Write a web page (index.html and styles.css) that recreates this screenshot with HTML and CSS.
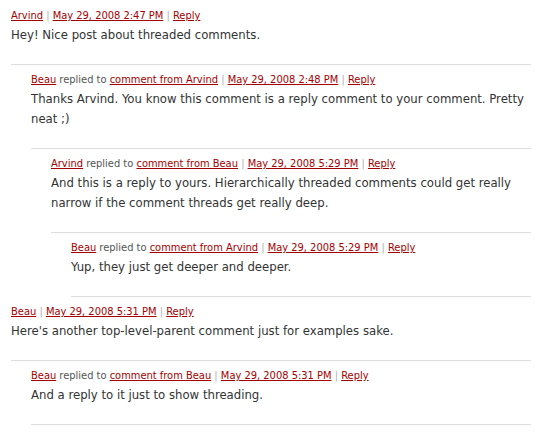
FILE: index.html
```html
<!doctype html>
<html lang="en">
<head>
  <meta charset="utf-8">
  <title>Threaded Comments</title>
  <link rel="stylesheet" href="styles.css">
</head>
<body>

<div class="comment-list">

  <div class="comment">
    <div class="comment-body">
      <div class="meta"><a href="#">Arvind</a> <span class="sep">|</span> <a href="#">May 29, 2008 2:47 PM</a> <span class="sep">|</span> <a href="#">Reply</a></div>
      <p>Hey! Nice post about threaded comments.</p>
    </div>
    <div class="children">
      <div class="comment">
        <div class="comment-body">
          <div class="meta"><a href="#">Beau</a> replied to <a href="#">comment from Arvind</a> <span class="sep">|</span> <a href="#">May 29, 2008 2:48 PM</a> <span class="sep">|</span> <a href="#">Reply</a></div>
          <p>Thanks Arvind. You know this comment is a reply comment to your comment. Pretty neat ;)</p>
        </div>
        <div class="children">
          <div class="comment">
            <div class="comment-body">
              <div class="meta"><a href="#">Arvind</a> replied to <a href="#">comment from Beau</a> <span class="sep">|</span> <a href="#">May 29, 2008 5:29 PM</a> <span class="sep">|</span> <a href="#">Reply</a></div>
              <p>And this is a reply to yours. Hierarchically threaded comments could get really narrow if the comment threads get really deep.</p>
            </div>
            <div class="children">
              <div class="comment">
                <div class="comment-body">
                  <div class="meta"><a href="#">Beau</a> replied to <a href="#">comment from Arvind</a> <span class="sep">|</span> <a href="#">May 29, 2008 5:29 PM</a> <span class="sep">|</span> <a href="#">Reply</a></div>
                  <p>Yup, they just get deeper and deeper.</p>
                </div>
              </div>
            </div>
          </div>
        </div>
      </div>
    </div>
  </div>

  <div class="comment">
    <div class="comment-body">
      <div class="meta"><a href="#">Beau</a> <span class="sep">|</span> <a href="#">May 29, 2008 5:31 PM</a> <span class="sep">|</span> <a href="#">Reply</a></div>
      <p>Here's another top-level-parent comment just for examples sake.</p>
    </div>
    <div class="children">
      <div class="comment">
        <div class="comment-body">
          <div class="meta"><a href="#">Beau</a> replied to <a href="#">comment from Beau</a> <span class="sep">|</span> <a href="#">May 29, 2008 5:31 PM</a> <span class="sep">|</span> <a href="#">Reply</a></div>
          <p>And a reply to it just to show threading.</p>
        </div>
      </div>
    </div>
  </div>

</div>

</body>
</html>
```

FILE: styles.css
```css
body {
  margin: 0;
  padding: 1px 14px 0 11px;
  background: #ffffff;
  font-family: "DejaVu Sans Condensed", "DejaVu Sans", sans-serif;
  color: #333;
}

.comment-body {
  padding: 7px 0 19px;
  border-bottom: 1px solid #dddddd;
}

.children {
  margin-left: 20px;
}

.meta {
  font-size: 11px;
  line-height: 16px;
  color: #555;
  margin-bottom: 1px;
}

.meta a {
  color: #a50000;
  text-decoration: underline;
}

.meta .sep {
  color: #b0b0b0;
}

.comment-body p {
  margin: 0;
  font-size: 13px;
  line-height: 20px;
}
```
